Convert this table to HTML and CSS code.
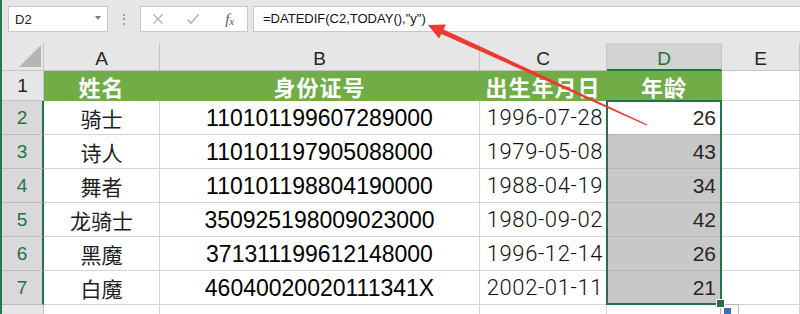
FILE: index.html
```html
<!DOCTYPE html>
<html lang="zh">
<head>
<meta charset="utf-8">
<title>DATEDIF</title>
<link rel="stylesheet" href="styles.css">
</head>
<body>
<div class="app">
  <div class="fbar">
    <div class="namebox"><span class="ref">D2</span><span class="caret"></span></div>
    <div class="grip"><i></i><i></i><i></i></div>
    <div class="btns">
      <span class="btn"><svg width="12" height="12" viewBox="0 0 12 12"><path d="M1.5 1.5L10.5 10.5M10.5 1.5L1.5 10.5" stroke="#b3b3b3" stroke-width="1.4" fill="none"/></svg></span>
      <span class="btn"><svg width="14" height="12" viewBox="0 0 14 12"><path d="M1.5 6.5L5 10L12.5 1.5" stroke="#b3b3b3" stroke-width="1.6" fill="none"/></svg></span>
      <span class="btn fx">f<span class="fxs">x</span></span>
    </div>
    <div class="formula">=DATEDIF(C2,TODAY(),"y")</div>
  </div>
  <div class="sheet">
    <div class="corner"><svg width="22" height="22" viewBox="0 0 22 22"><polygon points="22,0 22,22 0,22" fill="#b5b5b5"/></svg></div>
    <div class="ch">A</div>
    <div class="ch">B</div>
    <div class="ch">C</div>
    <div class="ch on">D</div>
    <div class="ch">E</div>

    <div class="rh">1</div>
    <div class="c hd">姓名</div>
    <div class="c hd">身份证号</div>
    <div class="c hd">出生年月日</div>
    <div class="c hd">年龄</div>
    <div class="c"></div>

    <div class="rh on">2</div>
    <div class="c nm">骑士</div>
    <div class="c id">110101199607289000</div>
    <div class="c dt">1996-07-28</div>
    <div class="c age act">26<span class="selbox"><span class="qa"><i></i></span></span></div>
    <div class="c"></div>

    <div class="rh on">3</div>
    <div class="c nm">诗人</div>
    <div class="c id">110101197905088000</div>
    <div class="c dt">1979-05-08</div>
    <div class="c age">43</div>
    <div class="c"></div>

    <div class="rh on">4</div>
    <div class="c nm">舞者</div>
    <div class="c id">110101198804190000</div>
    <div class="c dt">1988-04-19</div>
    <div class="c age">34</div>
    <div class="c"></div>

    <div class="rh on">5</div>
    <div class="c nm">龙骑士</div>
    <div class="c id">350925198009023000</div>
    <div class="c dt">1980-09-02</div>
    <div class="c age">42</div>
    <div class="c"></div>

    <div class="rh on">6</div>
    <div class="c nm">黑魔</div>
    <div class="c id">371311199612148000</div>
    <div class="c dt">1996-12-14</div>
    <div class="c age">26</div>
    <div class="c"></div>

    <div class="rh on">7</div>
    <div class="c nm">白魔</div>
    <div class="c id">46040020020111341X</div>
    <div class="c dt">2002-01-11</div>
    <div class="c age">21</div>
    <div class="c"></div>

    <div class="rh"></div>
    <div class="c"></div>
    <div class="c"></div>
    <div class="c"></div>
    <div class="c"></div>
    <div class="c"></div>
  </div>
  <svg class="arrow" width="800" height="314" viewBox="0 0 800 314">
    <polygon points="428,25 446,24.6 443.6,29.4 647.3,124.4 646.7,125.6 441.4,34 439,38.6" fill="#ec3a31"/>
  </svg>
</div>
</body>
</html>
```

FILE: styles.css
```css
* { box-sizing: border-box; }
html, body { margin: 0; padding: 0; }
body { background: #fff; font-family: "Liberation Sans", Arial, sans-serif; }

.app {
  position: relative;
  width: 800px;
  height: 314px;
  overflow: hidden;
  border-left: 2px solid #2f7450;
  background: #fff;
}

/* formula bar */
.fbar {
  display: flex;
  align-items: flex-start;
  height: 43px;
  padding: 6px 0 0 6px;
  background: #e6e6e6;
}
.namebox {
  width: 100px;
  height: 26px;
  background: #fff;
  border: 1px solid #c8c8c8;
  display: flex;
  align-items: center;
  justify-content: space-between;
  padding: 0 6px 0 6px;
  font-size: 13px;
  color: #222;
}
.caret {
  width: 0; height: 0;
  border-left: 3.5px solid transparent;
  border-right: 3.5px solid transparent;
  border-top: 4px solid #7a7a7a;
  margin-top: -3px;
}
.grip {
  width: 32px;
  height: 26px;
  display: flex;
  flex-direction: column;
  align-items: center;
  justify-content: center;
  gap: 2.5px;
}
.grip i { display: block; width: 2px; height: 2px; background: #9d9d9d; }
.btns {
  width: 108px;
  height: 26px;
  background: #fff;
  border: 1px solid #c8c8c8;
  display: flex;
  align-items: center;
}
.btn {
  flex: 1;
  display: flex;
  align-items: center;
  justify-content: center;
}
.fx {
  font-family: "Liberation Serif", "Times New Roman", serif;
  font-style: italic;
  font-size: 15px;
  color: #555;
  padding-left: 2px;
}
.fxs { font-size: 11px; position: relative; top: 2px; }
.formula {
  flex: 1;
  margin-left: 5px;
  margin-right: -4px;
  height: 26px;
  background: #fff;
  border: 1px solid #c8c8c8;
  padding: 0 0 0 9px;
  font-size: 13px;
  line-height: 23px;
  color: #111;
  white-space: nowrap;
}

/* sheet grid */
.sheet {
  display: grid;
  grid-template-columns: 42px 116px 320px 127px 115px 1fr;
  grid-template-rows: 28px 30px repeat(7, 34px);
}
.corner {
  background: #e6e6e6;
  border-right: 1px solid #c4c4c4;
  border-bottom: 1px solid #c4c4c4;
  display: flex;
  align-items: flex-end;
  justify-content: flex-end;
  padding: 0 2px 3px 0;
}
.ch {
  background: #e6e6e6;
  border-right: 1px solid #c4c4c4;
  border-bottom: 1px solid #c4c4c4;
  display: flex;
  justify-content: center;
  align-items: center;
  padding-top: 5px;
  font-size: 19px;
  color: #262626;
}
.ch.on {
  background: #d3d3d3;
  color: #217346;
  border-bottom: 2px solid #217346;
}
.rh {
  background: #e6e6e6;
  border-right: 1px solid #c4c4c4;
  border-bottom: 1px solid #c4c4c4;
  display: flex;
  justify-content: center;
  align-items: center;
  font-size: 19px;
  color: #262626;
}
.rh.on {
  background: #d9d9d9;
  color: #217346;
  border-right: 2px solid #217346;
  border-bottom-color: #bdbdbd;
}
.c {
  border-right: 1px solid #d4d4d4;
  border-bottom: 1px solid #d4d4d4;
  display: flex;
  align-items: center;
  white-space: nowrap;
  overflow: hidden;
}
.hd {
  background: #70ad47;
  border-color: #70ad47;
  justify-content: center;
  color: #fff;
  font-family: "Noto Sans CJK SC", sans-serif;
  font-weight: 700;
  font-size: 22px;
  letter-spacing: 1px;
}
.nm {
  justify-content: center;
  font-family: "Noto Sans CJK SC", sans-serif;
  font-size: 21px;
  color: #1e1e1e;
}
.id {
  justify-content: center;
  font-size: 23px;
  color: #000;
  padding-top: 1px;
}
.dt {
  justify-content: flex-end;
  padding-right: 3px;
  font-family: Roboto, "Liberation Sans", sans-serif;
  font-weight: 300;
  font-size: 22px;
  letter-spacing: 0.6px;
  color: #111;
}
.age {
  justify-content: flex-end;
  padding-right: 5px;
  font-size: 21px;
  color: #262626;
  background: #c8c8c8;
  border-bottom-color: #b6b6b6;
}
.age.act {
  background: #fff;
  position: relative;
  overflow: visible;
  z-index: 2;
}

.selbox {
  position: absolute;
  left: -1px;
  top: -1px;
  width: calc(100% + 2px);
  height: 205px;
  border: 2px solid #217346;
  pointer-events: none;
}
.selbox::after {
  content: "";
  position: absolute;
  right: -5px;
  bottom: -5px;
  width: 7px;
  height: 7px;
  background: #217346;
  border: 1px solid #fff;
}
.qa {
  position: absolute;
  left: 100%;
  top: 100%;
  margin: 1px 0 0 0;
  width: 19px;
  height: 16px;
  background: #fff;
  border: 1px solid #b4b4b4;
}
.qa i {
  position: absolute;
  left: 3px;
  top: 3px;
  width: 7px;
  height: 7px;
  background: #3d6fc4;
}

.arrow {
  position: absolute;
  left: -2px;
  top: 0;
  pointer-events: none;
  z-index: 5;
}
```
